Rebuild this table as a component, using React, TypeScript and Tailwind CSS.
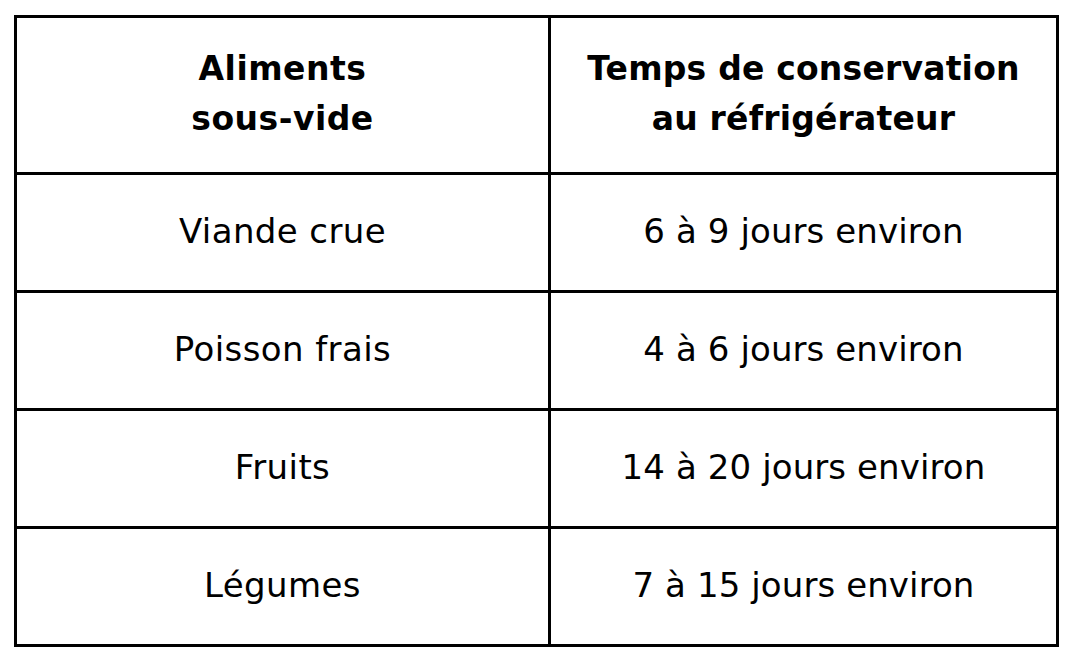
const rows = [
  ["Viande crue", "6 à 9 jours environ"],
  ["Poisson frais", "4 à 6 jours environ"],
  ["Fruits", "14 à 20 jours environ"],
  ["Légumes", "7 à 15 jours environ"],
];

export default function App() {
  return (
    <div className="w-[1071px] h-[662px] bg-white pt-[15px] pl-[14px] text-black font-['DejaVu_Sans',sans-serif]">
      <div className="w-[1045px] border-[3px] border-black">
        {/* header */}
        <div className="flex h-[157px] border-b-[3px] border-black">
          <div className="w-[534px] border-r-[3px] border-black flex items-center justify-center text-center font-bold text-[33px] leading-[50px] tracking-[0.5px] pb-[3px]">
            Aliments
            <br />
            sous-vide
          </div>
          <div className="flex-1 flex items-center justify-center text-center font-bold text-[33px] leading-[50px] tracking-[0.2px] pb-[3px]">
            Temps de conservation
            <br />
            au réfrigérateur
          </div>
        </div>

        {rows.map(([food, time], i) => (
          <div
            key={food}
            className={i < rows.length - 1 ? "flex h-[118px] border-b-[3px] border-black" : "flex h-[115px]"}
          >
            <div className="w-[534px] border-r-[3px] border-black flex items-center justify-center text-[34px] tracking-[0.4px] pb-[3px]">
              {food}
            </div>
            <div className="flex-1 flex items-center justify-center text-[34px] tracking-[0.1px] pb-[3px]">{time}</div>
          </div>
        ))}
      </div>
    </div>
  );
}
